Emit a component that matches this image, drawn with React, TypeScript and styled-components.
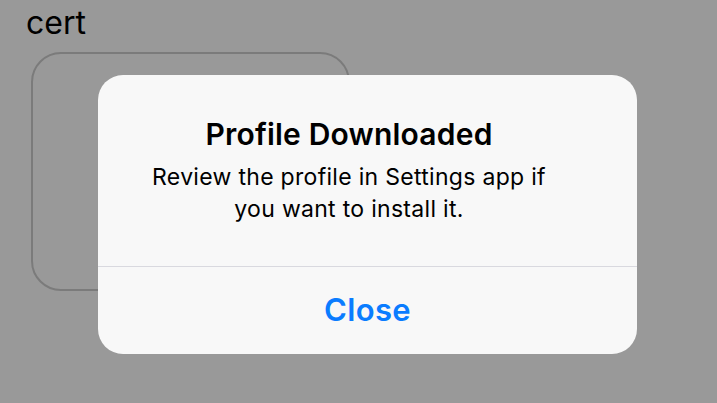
import React from "react";
import styled, { createGlobalStyle } from "styled-components";

const GlobalStyle = createGlobalStyle`
  html, body {
    margin: 0;
    padding: 0;
    background: #999999;
  }
  body {
    font-family: Inter, "Liberation Sans", sans-serif;
    -webkit-font-smoothing: antialiased;
  }
`;

const Page = styled.div`
  position: relative;
  width: 717px;
  height: 403px;
  overflow: hidden;
  background: #999999;
  padding: 3px 0 0 26px;
  box-sizing: border-box;
`;

const Heading = styled.div`
  font-size: 32px;
  line-height: 40px;
  color: #000;
`;

const CertBox = styled.div`
  margin: 9px 0 0 5px;
  width: 319px;
  height: 239px;
  box-sizing: border-box;
  border: 2px solid #7b7b7b;
  border-radius: 30px;
`;

// alert sits over the page content
const Alert = styled.div`
  position: absolute;
  left: 98px;
  top: 75px;
  width: 539px;
  height: 279px;
  background: #f8f8f8;
  border-radius: 25px;
  overflow: hidden;
  display: flex;
  flex-direction: column;
`;

// text block sits a little left of the alert's centre in the original
const AlertBody = styled.div`
  padding: 41px 57px 41px 20px;
  display: flex;
  flex-direction: column;
  align-items: center;
  gap: 9px;
  text-align: center;
  border-bottom: 1px solid #d9d9df;
`;

const AlertTitle = styled.div`
  font-size: 30px;
  line-height: 36px;
  font-weight: 600;
  letter-spacing: 0.2px;
  color: #000;
`;

const AlertMessage = styled.div`
  font-size: 23px;
  line-height: 32px;
  letter-spacing: 0.3px;
  color: #000;
  max-width: 410px;
`;

const AlertButton = styled.button`
  flex: 1;
  border: 0;
  background: transparent;
  font-family: inherit;
  font-size: 31px;
  font-weight: 600;
  letter-spacing: 0.4px;
  color: #0a7cff;
  padding: 0 0 2px;
  cursor: pointer;
`;

export default function App() {
  return (
    <>
      <GlobalStyle />
      <Page>
        <Heading>cert</Heading>
        <CertBox />
        <Alert>
          <AlertBody>
            <AlertTitle>Profile Downloaded</AlertTitle>
            <AlertMessage>
              Review the profile in Settings app if you want to install it.
            </AlertMessage>
          </AlertBody>
          <AlertButton>Close</AlertButton>
        </Alert>
      </Page>
    </>
  );
}
